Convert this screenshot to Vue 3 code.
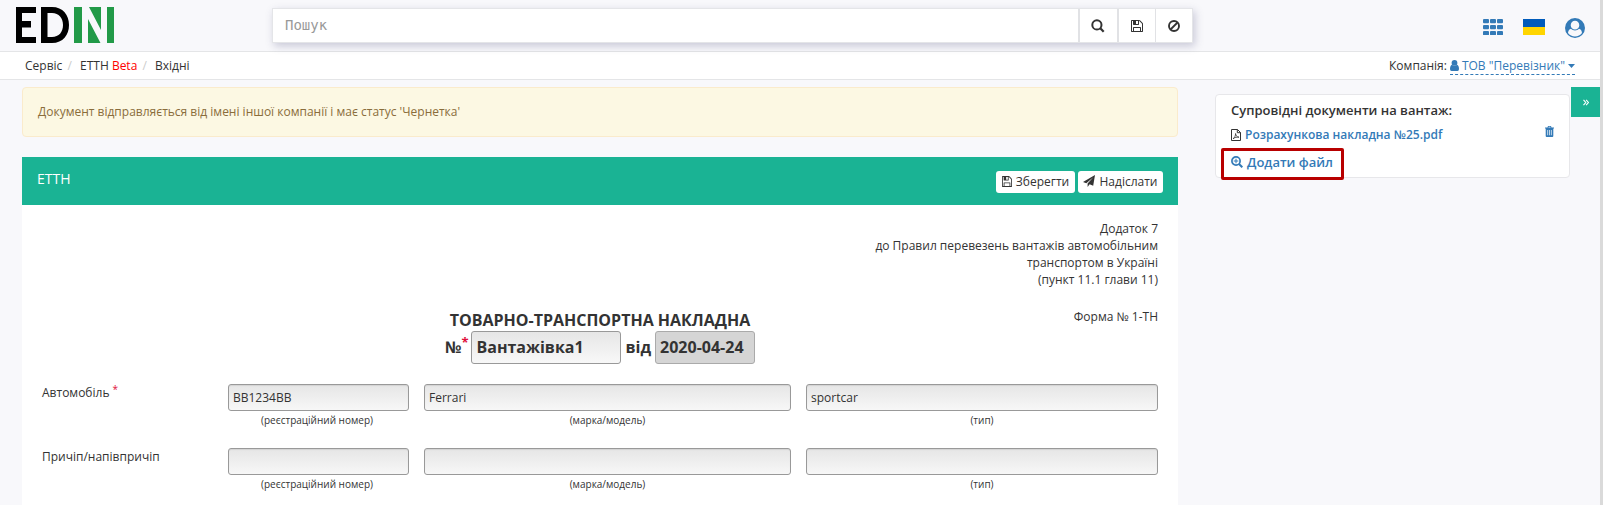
<script setup>
const rows = [
  { label: 'Автомобіль', required: true, values: ['BB1234BB', 'Ferrari', 'sportcar'] },
  { label: 'Причіп/напівпричіп', required: false, values: ['', '', ''] },
]
const captions = ['(реєстраційний номер)', '(марка/модель)', '(тип)']
const floppy = 'M384 1536h768v-384h-768v384zM1280 1536h128v-896q0-14-10-38.500t-20-34.500l-281-281q-10-10-34-20t-39-10v416q0 40-28 68t-68 28h-576q-40 0-68-28t-28-68v-416h-128v1280h128v-416q0-40 28-68t68-28h832q40 0 68 28t28 68v416zM896 608v-320q0-13-9.500-22.500t-22.500-9.500h-192q-13 0-22.500 9.500t-9.500 22.500v320q0 13 9.500 22.500t22.500 9.500h192q13 0 22.500-9.500t9.500-22.500zM1536 640v928q0 40-28 68t-68 28h-1344q-40 0-68-28t-28-68v-1344q0-40 28-68t68-28h928q40 0 88 20t76 48l280 280q28 28 48 76t20 88z'
const userCircle = 'M1523 1339q-22-155-87.500-257.500t-184.500-118.500q-67 74-159.500 115.500t-195.500 41.500t-195.500-41.500t-159.500-115.500q-119 16-184.500 118.500t-87.500 257.500q106 150 271 237.500t356 87.500t356-87.500t271-237.500zM1280 640q0-159-112.500-271.500t-271.500-112.500t-271.500 112.500t-112.500 271.500t112.500 271.500t271.500 112.500t271.500-112.500t112.500-271.500zM1792 896a896 896 0 1 1-1792 0a896 896 0 1 1 1792 0z'
</script>

<template>
  <div class="page">
    <div class="main">
      <header class="top">
        <svg class="logo" width="98" height="36" viewBox="0 0 98 36">
          <path d="M0 0H20V6H6V14H15V20.500H6V30H20V36H0Z" />
          <path fill-rule="evenodd" d="M25 0H36C47 0 53 8 53 18S47 36 36 36H25ZM31.500 6V30H36C43 30 47 25 47 18S43 6 36 6Z" />
          <path fill="#229a48" d="M58 0H66V36H58ZM72 12L84.500 36H72ZM73 0H85V23ZM91 0H98V36H91Z" />
        </svg>
        <div class="search">
          <input placeholder="Пошук" />
          <button class="b1"><svg width="14" height="14" viewBox="0 0 14 14"><circle cx="5.900" cy="5.900" r="4.600" fill="none" stroke="#333" stroke-width="2" /><path d="M9.300 9.300L12.700 12.700" stroke="#333" stroke-width="2.300" /></svg></button>
          <button class="b2"><svg width="12" height="12" viewBox="0 128 1536 1536"><path :d="floppy" fill="#333" /></svg></button>
          <button class="b3"><svg width="12" height="12" viewBox="0 0 12 12"><circle cx="6" cy="6" r="5" fill="none" stroke="#333" stroke-width="1.900" /><path d="M2.500 9.500L9.500 2.500" stroke="#333" stroke-width="1.800" /></svg></button>
        </div>
        <div class="tools">
          <svg width="20" height="16" viewBox="0 0 20 16" fill="#337ab7">
            <template v-for="r in 3" :key="r"><rect v-for="c in 3" :key="c" :x="(c - 1) * 7" :y="(r - 1) * 6" width="6" height="4.300" rx="1" /></template>
          </svg>
          <svg class="flag" width="22" height="16"><rect width="22" height="8" fill="#005bbb" /><rect y="8" width="22" height="8" fill="#ffd500" /></svg>
          <svg class="user" width="20" height="20" viewBox="0 0 1792 1792"><path :d="userCircle" fill="#337ab7" fill-rule="evenodd" /></svg>
        </div>
      </header>
      <nav class="crumbs">
        <div class="trail"><span>Сервіс</span><i>/</i><span>ЕТТН <b>Beta</b></span><i>/</i><span>Вхідні</span></div>
        <div class="company">Компанія: <a><svg width="9" height="11" viewBox="0 0 9 11" fill="#337ab7"><circle cx="4.500" cy="2.900" r="2.900" /><path d="M2 4.800Q4.500 7.200 7 4.800Q9 5.500 9 9Q9 11 7.500 11H1.500Q0 11 0 9Q0 5.500 2 4.800Z" /></svg> ТОВ "Перевізник" <svg width="7" height="4" viewBox="0 0 7 4"><path d="M0 0H7L3.500 4Z" fill="#337ab7" /></svg></a></div>
      </nav>
      <div class="body">
        <main>
          <div class="alert">Документ відправляється від імені іншої компанії і має статус 'Чернетка'</div>
          <section class="panel">
            <div class="phead">
              <h5>ЕТТН</h5>
              <div class="actions">
                <button class="save"><svg width="10" height="11" viewBox="0 128 1536 1536" preserveAspectRatio="none"><path :d="floppy" fill="#333" /></svg>Зберегти</button>
                <button class="send"><svg width="12" height="12" viewBox="0 0 12 12"><path fill="#333" d="M12 0L10.200 10.800L6.600 9.300L4.600 12V8.600L10.300 2.200L3.300 8.200L0 6.900Z" /></svg>Надіслати</button>
              </div>
            </div>
            <div class="pbody">
              <div class="annex">Додаток 7<br />до Правил перевезень вантажів автомобільним<br />транспортом в Україні<br />(пункт 11.1 глави 11)</div>
              <div class="titles">
                <div class="title">
                  <div>ТОВАРНО-ТРАНСПОРТНА НАКЛАДНА</div>
                  <div class="num"><span>№</span><em>*</em><input class="no" value="Вантажівка1" /><span class="from">від</span><input class="date" value="2020-04-24" disabled /></div>
                </div>
                <div class="form-no">Форма № 1-ТН</div>
              </div>
              <div v-for="row in rows" :key="row.label" class="row">
                <label>{{ row.label }}<em v-if="row.required">*</em></label>
                <div v-for="(v, i) in row.values" :key="i" class="field"><input :value="v" /><small>{{ captions[i] }}</small></div>
              </div>
            </div>
          </section>
        </main>
        <aside>
          <div class="card">
            <div>Супровідні документи на вантаж:</div>
            <div class="file">
              <svg width="10" height="12" viewBox="0 0 10 12" fill="none" stroke="#333"><path d="M.5.5H6.500L9.500 3.500V11.500H.5ZM6.300.5V3.700H9.500" /><path stroke-width=".8" d="M2 9.800C3.500 9 4.700 6.500 4.600 4.500C4.700 6.800 6 8 8 8.200C6 7.900 3.700 8.400 2 9.800" /></svg>
              <a>Розрахункова накладна №25.pdf</a>
              <svg class="trash" width="9" height="11" viewBox="0 0 9 11"><path fill="#337ab7" fill-rule="evenodd" d="M0 1.500H2.500L3 0H6L6.500 1.500H9V2.600H8.300V10Q8.300 11 7.300 11H1.700Q.7 11 .7 10V2.600H0ZM3.400 1.500H5.600L5.300.8H3.700ZM2.400 4V9.300H3.100V4ZM4.150 4V9.300H4.850V4ZM5.900 4V9.300H6.600V4Z" /></svg>
            </div>
            <div class="add"><svg width="12" height="12" viewBox="0 0 12 12" fill="none" stroke="#337ab7"><circle cx="5" cy="5" r="4.100" stroke-width="1.700" /><path stroke-width="2" d="M8 8L11.300 11.300" /><path stroke-width="1" d="M2.700 5H7.300M5 2.700V7.300" /></svg>Додати файл</div>
          </div>
          <button class="toggle"><svg width="6" height="7" viewBox="0 0 6 7" fill="none" stroke="#fff" stroke-width="1.100"><path d="M.5.800L2.800 3.500L.5 6.200M3.100.8L5.400 3.500L3.100 6.200" /></svg></button>
        </aside>
      </div>
    </div>
    <div class="strip"></div>
  </div>
</template>

<style>
html, body { margin: 0; overflow: hidden; }
</style>

<style scoped>
* { box-sizing: border-box; }
.page { display: flex; width: 1603px; height: 505px; overflow: hidden; background: #f8f8fb; font: 12px/17px "Open Sans", sans-serif; color: #333; }
.main { width: 1600px; }
.strip { width: 3px; background: #dadada; }
svg { display: block; flex: none; }
button { font: inherit; color: inherit; margin: 0; padding: 0; border: 0; background: #fff; display: flex; align-items: center; justify-content: center; }
input { font: inherit; color: #333; margin: 0; outline: 0; }
em { font-style: normal; color: #e0103a; }
.top { display: flex; height: 52px; border-bottom: 1px solid #e4e5e7; padding: 7px 19px 0 16px; }
.search { display: flex; width: 921px; height: 35px; margin: 1px 0 0 158px; border: 1px solid #e4e5e8; box-shadow: 2px 3px 8px rgba(60, 60, 110, .25); background: #fff; }
.search input { flex: 1; border: 0; padding: 0 11px 2px 12px; font: 14px "DejaVu Sans Mono", monospace; background: #fff; }
.search input::placeholder { color: #999; opacity: 1; }
.search button { border-left: 1px solid #e1e2e5; }
.search .b1 { width: 39px; border-left-width: 2px; padding-right: 2px; }
.search .b2 { width: 38px; border-left-width: 2px; padding-right: 1px; }
.search .b3 { width: 37px; }
.tools { display: flex; align-items: center; height: 40px; margin-left: auto; margin-right: -4px; }
.flag { margin: 0 20px; }
.user { margin-top: 1px; }
.crumbs { display: flex; justify-content: space-between; height: 28px; padding: 5px 25px 0 25px; background: #fff; border-bottom: 1px solid #e4e5e7; }
.trail { display: flex; }
.trail i { font-style: normal; color: #ccc; margin: 0 8px 0 5.300px; }
.trail b { font-weight: 400; color: red; }
.company { display: flex; gap: 3px; }
.company a { display: flex; align-items: center; gap: 3px; height: 18px; color: #337ab7; border-bottom: 1px dashed #337ab7; }
.body { display: flex; padding: 7px 0 0 22px; }
main { width: 1156px; }
.alert { height: 50px; border: 1px solid #faebcc; border-radius: 4px; background: #fcf8e3; color: #8a6d3b; padding: 15px; }
.panel { margin-top: 20px; background: #fff; height: 360px; }
.phead { display: flex; justify-content: space-between; height: 48px; background: #1ab394; color: #fff; padding: 14px 15px; }
h5 { margin: -1px 0 0; font-size: 14px; font-weight: 400; line-height: 17px; }
.actions { display: flex; gap: 3px; color: #333; }
.actions button { height: 22px; border-radius: 3px; gap: 4px; font-size: 12px; padding-bottom: 2px; }
.save { width: 79px; }
.send { width: 85px; }
.pbody { padding: 15px 20px; }
.annex { text-align: right; }
.titles { display: grid; grid-template-columns: 359px 398px 359px; margin-top: 20px; }
.title { grid-column: 2; text-align: center; font-size: 16px; line-height: 25px; font-weight: 700; }
.num { display: flex; justify-content: center; align-items: center; height: 33px; margin-top: -2px; }
.num span { margin-top: -1px; }
.num em { align-self: flex-start; font-size: 13px; font-weight: 700; line-height: 22px; }
.form-no { text-align: right; }
.no, .date { height: 33px; padding: 0 4px 2px; border: 1px solid #999; border-radius: 3px; background: linear-gradient(#e6e6e6, #f8f8f8); }
.no { width: 150px; margin-left: 3px; }
.date { width: 100px; background: #d5d5d5; border-color: #aaa; }
.num .from { margin-left: 4px; margin-right: 4px; }
.row { display: grid; grid-template-columns: 171px 181px 367px 352px; column-gap: 15px; height: 64px; }
.row:nth-of-type(3) { margin-top: 20px; }
label { display: flex; }
label em { margin: -3px 0 0 3px; font-size: 10px; }
.field { text-align: center; }
.field input { display: block; width: 100%; height: 27px; padding: 0 4px; border: 1px solid #999; border-radius: 3px; background: linear-gradient(#e6e6e6, #f7f7f7); box-shadow: inset 0 1px 1px rgba(0, 0, 0, .08); }
small { display: block; font-size: 10px; line-height: 14px; margin-top: 2px; }
.field:nth-child(2) small { padding-right: 3px; }
aside { display: flex; align-items: flex-start; margin-left: 37px; }
.card { width: 355px; height: 84px; margin-top: 7px; border: 1px solid #e7e7ea; border-radius: 4px; background: #fff; padding: 6px 15px; font-size: 13px; font-weight: 600; line-height: 18px; }
.file { display: flex; align-items: center; gap: 4px; color: #337ab7; margin-top: 7px; font-size: 12px; }
.trash { margin: -7px 0 0 auto; }
.add { display: flex; align-items: center; gap: 4px; width: 123px; height: 32px; margin: 4px 0 0 -10px; padding: 0 0 5px 7px; border: 3px solid #b80000; border-radius: 2px; color: #337ab7; }
.toggle { width: 29px; height: 30px; margin-left: 1px; background: #1ab394; }
</style>
